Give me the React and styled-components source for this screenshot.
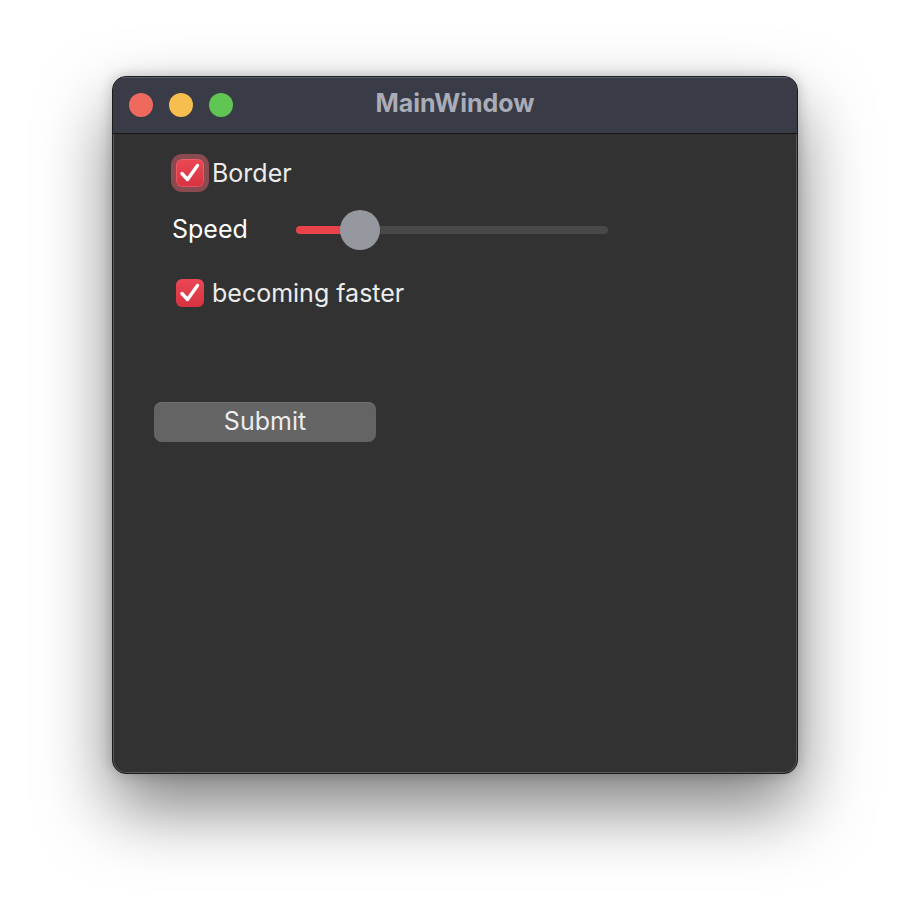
import React from "react";
import styled, { createGlobalStyle } from "styled-components";

const GlobalStyle = createGlobalStyle`
  html, body {
    margin: 0;
    padding: 0;
    background: #ffffff;
    font-family: Inter, "Liberation Sans", sans-serif;
  }
`;

const Page = styled.div`
  width: 910px;
  height: 922px;
  display: flex;
  padding: 76px 0 0 112px;
  box-sizing: border-box;
`;

const Window = styled.div`
  width: 686px;
  height: 698px;
  border-radius: 14px;
  background: #323232;
  box-sizing: border-box;
  border: 1px solid #1c1c1c;
  box-shadow: inset 0 0 0 1px #5a5a5a, 0 34px 70px rgba(0, 0, 0, 0.5),
    0 0 14px rgba(0, 0, 0, 0.22);
  overflow: hidden;
  display: flex;
  flex-direction: column;
`;

const TitleBar = styled.div`
  height: 56px;
  flex-shrink: 0;
  background: #393c47;
  border-bottom: 1px solid #141414;
  box-shadow: inset 0 1px 0 #5b5e68;
  display: flex;
  align-items: center;
  padding-left: 16px;
  position: relative;
`;

const Light = styled.span`
  width: 24px;
  height: 24px;
  border-radius: 50%;
  background: ${(p) => p.color};
  margin-right: 16px;
`;

const Title = styled.div`
  position: absolute;
  left: 0;
  right: 0;
  top: 11px;
  text-align: center;
  font-weight: 700;
  font-size: 25px;
  line-height: 30px;
  color: #aaacb7;
  pointer-events: none;
`;

const Content = styled.div`
  flex: 1;
  display: flex;
  flex-direction: column;
  align-items: flex-start;
  color: #ececec;
  font-size: 25px;
`;

const CheckRow = styled.label`
  display: flex;
  align-items: center;
  gap: 8px;
  margin-top: ${(p) => p.$top}px;
  margin-left: ${(p) => p.$left}px;
  height: 38px;
`;

const Box = styled.span`
  width: 28px;
  height: 28px;
  border-radius: 6px;
  background: linear-gradient(#ec4754, #d7323f);
  display: flex;
  align-items: center;
  justify-content: center;
  box-shadow: ${(p) =>
    p.$focus
      ? "inset 0 0 0 1px rgba(255,140,150,0.35), 0 0 0 5px #8a4b50"
      : "none"};
`;

const SliderRow = styled.div`
  display: flex;
  align-items: center;
  height: 40px;
  margin-top: 18px;
  margin-left: 59px;
`;

const SliderLabel = styled.span`
  width: 124px;
  color: #ffffff;
  margin-top: -3px;
`;

const Track = styled.div`
  width: 312px;
  height: 8px;
  border-radius: 4px;
  background: #484848;
  position: relative;
  display: flex;
  align-items: center;
`;

const Fill = styled.div`
  height: 8px;
  border-radius: 4px 0 0 4px;
  background: #e8424a;
`;

const Thumb = styled.div`
  position: absolute;
  top: -16px;
  width: 40px;
  height: 40px;
  border-radius: 50%;
  background: #95989f;
`;

const Button = styled.button`
  margin-top: 90px;
  margin-left: 41px;
  width: 222px;
  height: 40px;
  border: none;
  border-radius: 8px;
  background: #646464;
  box-shadow: inset 0 1px 0 #6e6e6e;
  color: #ececec;
  font-family: inherit;
  font-size: 25px;
  padding: 0 0 2px;
`;

const Check = () => (
  <svg width="28" height="28" viewBox="0 0 28 28">
    <path
      d="M6 14.5 L11.5 20.5 L21.5 6.5"
      fill="none"
      stroke="#ffffff"
      strokeWidth="3.4"
      strokeLinecap="round"
      strokeLinejoin="round"
    />
  </svg>
);

const CheckBox = ({ label, focus, top, left }) => (
  <CheckRow $top={top} $left={left}>
    <Box $focus={focus}>
      <Check />
    </Box>
    <span>{label}</span>
  </CheckRow>
);

const App = () => {
  const value = 20;
  return (
    <Page>
      <GlobalStyle />
      <Window>
        <TitleBar>
          <Light color="#ee6a5f" />
          <Light color="#f5be4f" />
          <Light color="#61c554" />
          <Title>MainWindow</Title>
        </TitleBar>
        <Content>
          <CheckBox label="Border" focus top={20} left={63} />
          <SliderRow>
            <SliderLabel>Speed</SliderLabel>
            <Track>
              <Fill style={{ width: `${value}%` }} />
              <Thumb style={{ left: 44 }} />
            </Track>
          </SliderRow>
          <CheckBox label="becoming faster" top={24} left={63} />
          <Button>Submit</Button>
        </Content>
      </Window>
    </Page>
  );
};

export default App;
